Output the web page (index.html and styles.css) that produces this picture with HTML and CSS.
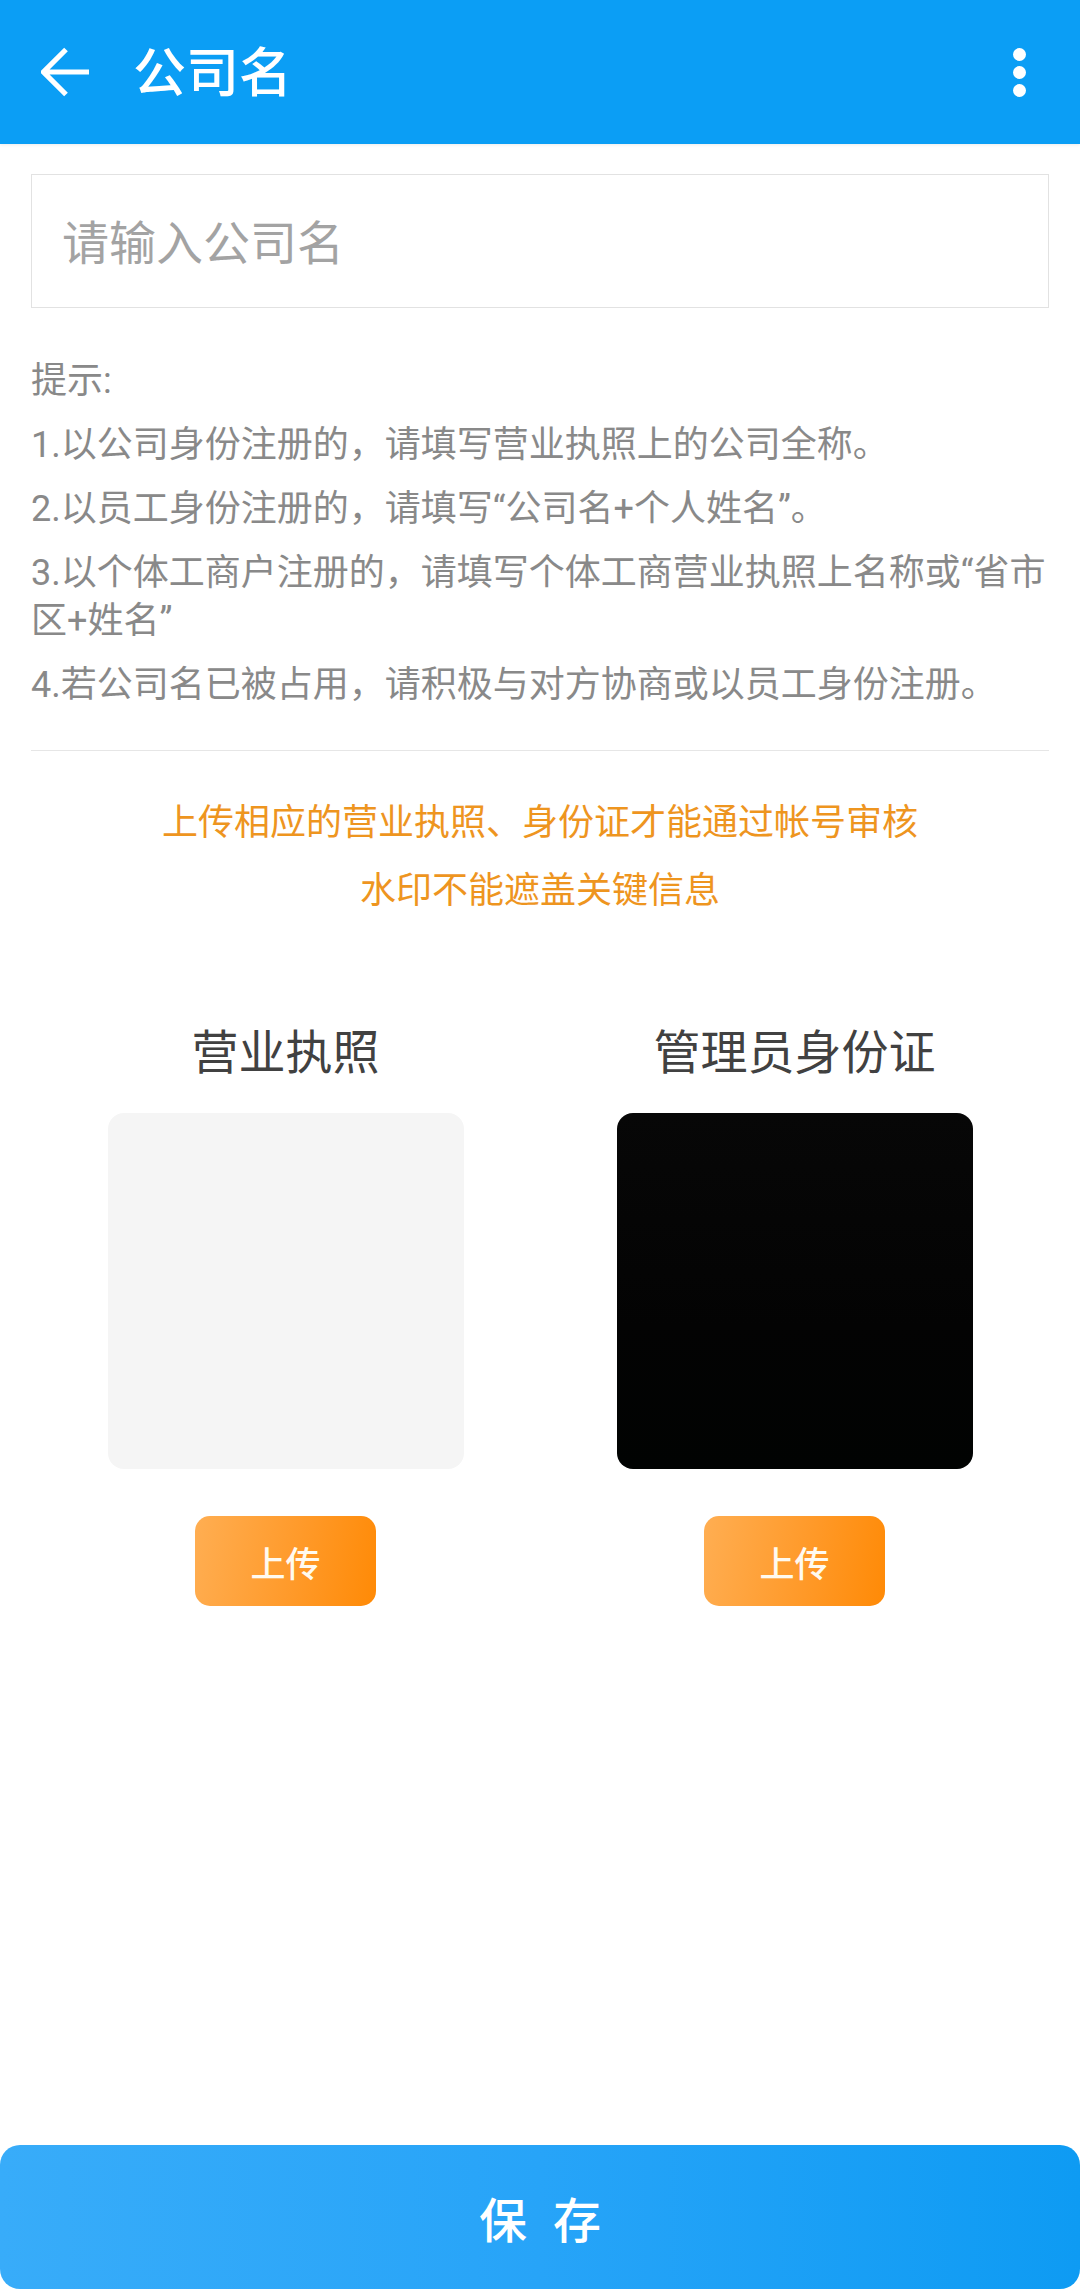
FILE: index.html
```html
<!DOCTYPE html>
<html lang="zh-CN">
<head>
<meta charset="utf-8">
<title>公司名</title>
<link rel="stylesheet" href="styles.css">
</head>
<body>
<div class="page">
  <header class="appbar">
    <svg class="back" width="50" height="50" viewBox="0 0 50 50" aria-hidden="true">
      <path d="M48 25 H3 M25 2.5 L2.5 25 L25 47.5" fill="none" stroke="#fff" stroke-width="5.2" stroke-linejoin="miter"/>
    </svg>
    <h1 class="title">公司名</h1>
    <div class="kebab" aria-label="更多">
      <span class="dot"></span><span class="dot"></span><span class="dot"></span>
    </div>
  </header>

  <main class="content">
    <div class="field">
      <span class="placeholder">请输入公司名</span>
    </div>

    <div class="tips">
      <p>提示:</p>
      <p>1.以公司身份注册的，请填写营业执照上的公司全称。</p>
      <p>2.以员工身份注册的，请填写“公司名+个人姓名”。</p>
      <p>3.以个体工商户注册的，请填写个体工商营业执照上名称或“省市区+姓名”</p>
      <p>4.若公司名已被占用，请积极与对方协商或以员工身份注册。</p>
    </div>

    <hr class="divider">

    <div class="notice">
      <p>上传相应的营业执照、身份证才能通过帐号审核</p>
      <p>水印不能遮盖关键信息</p>
    </div>

    <div class="uploads">
      <section class="slot">
        <h2 class="slot-title">营业执照</h2>
        <div class="card card-light"></div>
        <button class="upload-btn">上传</button>
      </section>
      <section class="slot">
        <h2 class="slot-title">管理员身份证</h2>
        <div class="card card-dark"></div>
        <button class="upload-btn">上传</button>
      </section>
    </div>
  </main>

  <div class="spacer"></div>

  <button class="save">保 存</button>
</div>
</body>
</html>
```

FILE: styles.css
```css
html, body {
  margin: 0;
  padding: 0;
  background: #ffffff;
}

body {
  font-family: Roboto, "Noto Sans CJK SC", "Noto Sans", sans-serif;
}

.page {
  width: 1080px;
  height: 2289px;
  display: flex;
  flex-direction: column;
  overflow: hidden;
}

/* App bar */
.appbar {
  height: 144px;
  flex: none;
  background: #0b9ef5;
  display: flex;
  align-items: center;
  padding: 0 54px 0 41px;
  box-shadow: 0 1px 3px rgba(0, 0, 0, 0.08);
}

.back {
  flex: none;
  display: block;
}

.title {
  margin: 0 0 0 42px;
  font-size: 53px;
  font-weight: 500;
  color: #ffffff;
  line-height: 1;
  flex: 1;
  position: relative;
  top: 2px;
}

.kebab {
  display: flex;
  flex-direction: column;
  align-items: center;
  gap: 5px;
  width: 13px;
}

.dot {
  width: 13px;
  height: 13px;
  border-radius: 50%;
  background: #ffffff;
}

/* Content */
.content {
  padding: 0 31px;
  flex: none;
}

.field {
  margin-top: 30px;
  height: 132px;
  border: 1px solid #e2e2e2;
  display: flex;
  align-items: center;
  padding-left: 30px;
}

.placeholder {
  font-size: 47px;
  color: #a3a3a3;
  line-height: 1;
  position: relative;
  top: 2px;
}

.tips {
  margin-top: 49px;
  display: flex;
  flex-direction: column;
  gap: 16px;
}

.tips p {
  margin: 0;
  font-size: 36px;
  line-height: 48px;
  color: #898989;
}

.divider {
  margin: 41px 0 0;
  border: 0;
  height: 1px;
  background: #e6e6e6;
}

.notice {
  margin-top: 38px;
  text-align: center;
}

.notice p {
  margin: 0;
  font-size: 36px;
  line-height: 68px;
  color: #ee951f;
}

/* Uploads */
.uploads {
  margin-top: 96px;
  display: grid;
  grid-template-columns: 1fr 1fr;
}

.slot {
  display: flex;
  flex-direction: column;
  align-items: center;
}

.slot-title {
  margin: 0;
  font-size: 47px;
  font-weight: 400;
  line-height: 64px;
  color: #414141;
}

.card {
  margin-top: 28px;
  width: 356px;
  height: 356px;
  border-radius: 16px;
}

.card-light {
  background: #f5f5f5;
}

.card-dark {
  background: linear-gradient(180deg, #070707 0%, #030303 60%, #010302 100%);
}

.upload-btn {
  margin-top: 47px;
  width: 181px;
  height: 90px;
  border: 0;
  border-radius: 15px;
  background: linear-gradient(100deg, #ffae52 0%, #ff9a2a 55%, #ff8a06 100%);
  color: #fffaf0;
  font-family: inherit;
  font-size: 35px;
  font-weight: 500;
  padding: 0;
}

.spacer {
  flex: 1;
}

/* Save */
.save {
  flex: none;
  height: 144px;
  width: 1080px;
  border: 0;
  border-radius: 20px;
  background: linear-gradient(90deg, #38acf9 0%, #27a4f8 50%, #0e9bf3 100%);
  color: #ffffff;
  font-family: inherit;
  font-size: 48px;
  font-weight: 500;
  word-spacing: 14px;
  padding: 0;
}
```
